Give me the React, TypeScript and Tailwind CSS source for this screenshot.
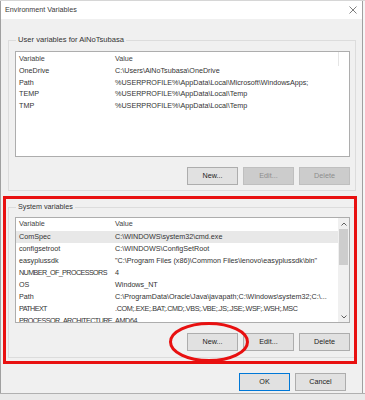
import React from "react";

type Row = { name: string; value: string; selected?: boolean };

const userVars: Row[] = [
  { name: "OneDrive", value: "C:\\Users\\AiNoTsubasa\\OneDrive" },
  { name: "Path", value: "%USERPROFILE%\\AppData\\Local\\Microsoft\\WindowsApps;" },
  { name: "TEMP", value: "%USERPROFILE%\\AppData\\Local\\Temp" },
  { name: "TMP", value: "%USERPROFILE%\\AppData\\Local\\Temp" },
];

const systemVars: Row[] = [
  { name: "ComSpec", value: "C:\\WINDOWS\\system32\\cmd.exe", selected: true },
  { name: "configsetroot", value: "C:\\WINDOWS\\ConfigSetRoot" },
  { name: "easyplussdk", value: "\"C:\\Program Files (x86)\\Common Files\\lenovo\\easyplussdk\\bin\"" },
  { name: "NUMBER_OF_PROCESSORS", value: "4" },
  { name: "OS", value: "Windows_NT" },
  { name: "Path", value: "C:\\ProgramData\\Oracle\\Java\\javapath;C:\\Windows\\system32;C:\\..." },
  { name: "PATHEXT", value: ".COM;.EXE;.BAT;.CMD;.VBS;.VBE;.JS;.JSE;.WSF;.WSH;.MSC" },
  { name: "PROCESSOR_ARCHITECTURE", value: "AMD64" },
];

// Segoe's capitals are narrower than Arial's, tighten long all-caps strings a bit
const caps = (s: string) => s.length > 4 && s === s.toUpperCase();

function Chevron({ up }: { up?: boolean }) {
  return (
    <svg width="6" height="4" viewBox="0 0 6 4">
      <path d={up ? "M0.5 3.5 L3 1 L5.5 3.5" : "M0.5 0.5 L3 3 L5.5 0.5"} fill="none" stroke="#606060" strokeWidth="1" />
    </svg>
  );
}

function Btn({ label, disabled, primary }: { label: string; disabled?: boolean; primary?: boolean }) {
  return (
    <div
      className={
        "w-[51px] h-[18px] flex items-center justify-center border " +
        (disabled
          ? "bg-[#cccccc] border-[#bfbfbf] text-[#8c8c8c]"
          : primary
          ? "bg-[#e1e1e1] border-[#0078d7] text-[#222]"
          : "bg-[#e1e1e1] border-[#adadad] text-[#222]")
      }
    >
      {label}
    </div>
  );
}

function VarList({ rows, headH, rowH, scroll }: { rows: Row[]; headH: string; rowH: string; scroll?: boolean }) {
  return (
    <div className="h-[106px] bg-white border border-[#adadad] flex overflow-hidden">
      <div className="flex-1 flex flex-col overflow-hidden">
        <div className={`${headH} shrink-0 flex items-center text-[#444]`}>
          <div className="w-[99px] pl-[3px]">Variable</div>
          <div className="flex-1">Value</div>
          {!scroll && <div className="w-[11px] h-full border-l border-[#e5e5e5]" />}
        </div>
        {rows.map((r) => (
          <div key={r.name} className={`${rowH} shrink-0 flex items-center whitespace-nowrap ${r.selected ? "bg-[#e8e8e8]" : ""}`}>
            <div className={`w-[99px] pl-[3px] overflow-hidden ${caps(r.name) ? "tracking-[-0.6px]" : ""}`}>{r.name}</div>
            <div className={`flex-1 ${caps(r.value) ? "tracking-[-0.35px]" : ""}`}>{r.value}</div>
          </div>
        ))}
      </div>
      {scroll && (
        <div className="w-[11px] bg-[#f0f0f0] flex flex-col items-center">
          <div className="h-[11px] flex items-center justify-center"><Chevron up /></div>
          <div className="w-[9px] h-[36px] bg-[#cdcdcd]" />
          <div className="flex-1" />
          <div className="h-[11px] flex items-center justify-center"><Chevron /></div>
        </div>
      )}
    </div>
  );
}

export default function App() {
  return (
    <div className="w-[365px] h-[400px] bg-[#f6f6f6] overflow-hidden relative font-['Liberation_Sans',Arial,sans-serif] text-[7.2px] text-[#333]">
      <div className="h-[1px] bg-[#d6d6d6]" />
      <div className="w-[363px] border-r border-l border-[#a0a0a0] bg-[#f0f0f0]">
        {/* title bar */}
        <div className="h-[18px] bg-white flex items-center justify-between pl-[4px] pr-[5px] text-[#3a3a3a]">
          <span>Environment Variables</span>
          <svg width="8" height="8" viewBox="0 0 8 8">
            <path d="M0.5 0.5 L7.5 7.5 M7.5 0.5 L0.5 7.5" stroke="#707070" strokeWidth="0.9" />
          </svg>
        </div>

        <div className="h-[374px] flex flex-col">
          {/* user variables */}
          <fieldset className="mt-[16px] ml-[7px] mr-[6px] border border-[#dcdcdc] pl-[6px] pr-[5px] pt-[6px] pb-[5px]">
            <legend className="ml-[1px] px-[2px] leading-[10px] text-[7.6px]">User variables for AiNoTsubasa</legend>
            <VarList rows={userVars} headH="h-[14px]" rowH="h-[11.5px]" />
            <div className="mt-[10px] flex justify-end gap-[5px]">
              <Btn label="New..." />
              <Btn label="Edit..." disabled />
              <Btn label="Delete" disabled />
            </div>
          </fieldset>

          {/* system variables */}
          <fieldset className="mt-[11px] ml-[7px] mr-[6px] border border-[#dcdcdc] pl-[6px] pr-[5px] pt-[5px] pb-[6px]">
            <legend className="ml-[1px] px-[2px] leading-[10px]">System variables</legend>
            <VarList rows={systemVars} headH="h-[13px]" rowH="h-[12px]" scroll />
            <div className="mt-[10px] flex justify-end gap-[5px]">
              <Btn label="New..." />
              <Btn label="Edit..." />
              <Btn label="Delete" />
            </div>
          </fieldset>

          <div className="mt-[15px] pr-[16px] flex justify-end gap-[5px]">
            <Btn label="OK" primary />
            <Btn label="Cancel" />
          </div>
        </div>
      </div>
      <div className="h-[7px] bg-[#e9e9e9] border-t border-[#b0b0b0]" />

      {/* red annotations */}
      <div className="absolute left-[3px] top-[196px] w-[354px] h-[168px] border-[3px] border-[#e81010]" />
      <svg className="absolute left-[168px] top-[321px]" width="82" height="42" viewBox="0 0 82 42">
        <ellipse cx="41" cy="21" rx="38.5" ry="18.5" fill="none" stroke="#e81010" strokeWidth="3" />
      </svg>
    </div>
  );
}
